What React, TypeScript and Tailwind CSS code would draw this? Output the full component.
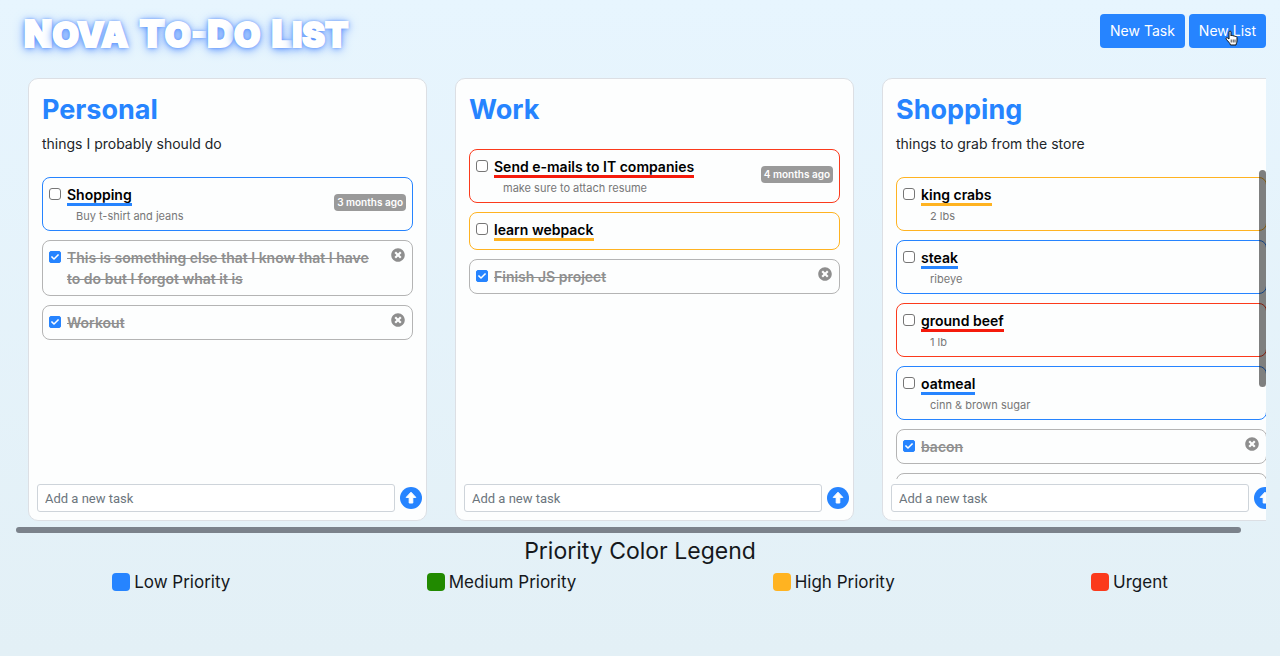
import React from "react";
import { FaCheck, FaTimesCircle } from "react-icons/fa";

type Priority = "low" | "medium" | "high" | "urgent";

interface Task {
  title: string;
  note?: string;
  priority: Priority;
  age?: string;
  done?: boolean;
}

interface TaskList {
  name: string;
  description?: string;
  tasks: Task[];
  scrollbar?: boolean;
}

const lists: TaskList[] = [
  {
    name: "Personal",
    description: "things I probably should do",
    tasks: [
      { title: "Shopping", note: "Buy t-shirt and jeans", priority: "low", age: "3 months ago" },
      { title: "This is something else that I know that I have to do but I forgot what it is", priority: "low", done: true },
      { title: "Workout", priority: "low", done: true },
    ],
  },
  {
    name: "Work",
    tasks: [
      { title: "Send e-mails to IT companies", note: "make sure to attach resume", priority: "urgent", age: "4 months ago" },
      { title: "learn webpack", priority: "high" },
      { title: "Finish JS project", priority: "low", done: true },
    ],
  },
  {
    name: "Shopping",
    description: "things to grab from the store",
    scrollbar: true,
    tasks: [
      { title: "king crabs", note: "2 lbs", priority: "high" },
      { title: "steak", note: "ribeye", priority: "low" },
      { title: "ground beef", note: "1 lb", priority: "urgent" },
      { title: "oatmeal", note: "cinn & brown sugar", priority: "low" },
      { title: "bacon", priority: "low", done: true },
      { title: "", priority: "low", done: true },
    ],
  },
];

const itemBorder: Record<Priority, string> = {
  low: "border-[#2684ff]",
  medium: "border-[#218a00]",
  high: "border-[#ffb321]",
  urgent: "border-[#fb3a1c]",
};

const titleBar: Record<Priority, string> = {
  low: "border-[#2684ff]",
  medium: "border-[#218a00]",
  high: "border-[#ffb321]",
  urgent: "border-[#f51b0c]",
};

const legend = [
  { label: "Low Priority", swatch: "bg-[#2684ff]" },
  { label: "Medium Priority", swatch: "bg-[#218a00]" },
  { label: "High Priority", swatch: "bg-[#ffb321]" },
  { label: "Urgent", swatch: "bg-[#fb3a1c]" },
];

function UpIcon() {
  return (
    <svg viewBox="0 0 22 22" className="size-[22px]" aria-hidden="true">
      <circle cx="11" cy="11" r="11" fill="#2684ff" />
      <path
        d="M11 5.200l4.800 5.200h-3v5.600h-3.600v-5.600h-3z"
        fill="#fff"
        stroke="#fff"
        strokeWidth="1"
        strokeLinejoin="round"
      />
    </svg>
  );
}

function TaskItem({ task, id }: { task: Task; id: string }) {
  const border = task.done ? "border-[#b4b4b4]" : itemBorder[task.priority];
  return (
    <li className={`flex min-h-[35px] shrink-0 items-start rounded-lg border p-1.5 ${border}`}>
      <span className="relative mt-1 flex size-3 shrink-0">
        <input
          id={id}
          type="checkbox"
          defaultChecked={task.done}
          className="peer size-3 appearance-none rounded-[3px] border border-[#767676] bg-white checked:rounded-[2px] checked:border-[#2684ff] checked:bg-[#2684ff]"
        />
        <FaCheck className="pointer-events-none absolute inset-0 m-auto hidden size-2 text-white peer-checked:block" />
      </span>
      <div className="ml-1.5 min-w-0 flex-1">
        {task.done ? (
          <label htmlFor={id} className="block text-sm leading-[21px] font-semibold text-[#8f8f8f] line-through">
            {task.title}
          </label>
        ) : (
          <label htmlFor={id} className="mb-[3px] block text-sm leading-[21px] font-semibold text-black">
            <span className={`border-b-[3px] ${titleBar[task.priority]}`}>{task.title}</span>
          </label>
        )}
        {task.note && <p className="pl-[9px] text-[11px] leading-4 text-[#777]">{task.note}</p>}
      </div>
      {task.age && (
        <span className="mt-2.5 rounded bg-[#9a9a9a] px-[3px] text-[10px] leading-[17px] font-semibold text-white">
          {task.age}
        </span>
      )}
      {task.done && (
        <button type="button" aria-label={`Remove ${task.title}`} className="mt-px mr-px ml-3 text-[#8e8e8e]">
          <FaTimesCircle className="size-[14px]" />
        </button>
      )}
    </li>
  );
}

function ListCard({ list }: { list: TaskList }) {
  const key = list.name.toLowerCase();
  return (
    <section className="mx-[14px] flex h-[443px] w-[399px] shrink-0 flex-col rounded-[10px] border border-[#dcdfe4] bg-[#fdfefe]">
      <h2 className="px-[13px] pt-3.5 text-[27px] leading-[34px] font-bold text-[#2684ff]">{list.name}</h2>
      {list.description && (
        <p className="px-[13px] pt-1.5 text-sm leading-[22px] text-[#212529]">{list.description}</p>
      )}
      <div className="relative mt-[15px] min-h-0 flex-1">
        <ul className="flex h-full flex-col gap-[9px] overflow-hidden px-[13px] pt-[7px]">
          {list.tasks.map((task, i) => (
            <TaskItem key={i} task={task} id={`${key}-${i}`} />
          ))}
        </ul>
        {list.scrollbar && <div className="absolute top-0 right-[14px] h-[217px] w-[7px] rounded-full bg-black/50" />}
      </div>
      <form className="flex items-center px-2 pt-[5px] pb-2" onSubmit={(e) => e.preventDefault()}>
        <input
          type="text"
          aria-label={`Add a new task to ${list.name}`}
          placeholder="Add a new task"
          className="h-7 min-w-0 flex-1 rounded-[3px] border border-[#ced4da] bg-white px-[7px] font-['Roboto',sans-serif] text-[13px] text-[#495057] placeholder:text-[#6c757d]"
        />
        <button type="submit" aria-label="Add task" className="mr-[-4px] ml-[5px]">
          <UpIcon />
        </button>
      </form>
    </section>
  );
}

function Cursor() {
  return (
    <svg viewBox="0 0 14 16" className="pointer-events-none absolute top-4 left-9 h-4 w-[14px]" aria-hidden="true">
      <path
        d="M4 9V2.2C4 .6 6 .6 6 2.2V6c.3-1 2-.9 2 .2.4-.8 2-.6 2 .5.6-.7 2-.3 2 .8V11c0 2-1 2.5-1 4H5.500C5 13 3 11.500 1.300 9.300.400 8 2 7.200 3 8.200z"
        fill="#fff"
        stroke="#111"
      />
      <path d="M6.200 9.500v3M8.200 9.500v3M10 9.500v3" stroke="#111" strokeWidth=".8" />
    </svg>
  );
}

const brandWords = ["Nova", "To-Do", "List"];

function Brand() {
  return (
    <h1 className="flex gap-[11px] text-[34px] leading-[40px] font-black whitespace-nowrap text-white uppercase [-webkit-text-stroke:2px_white] [text-shadow:0_0_3px_#3b78f0,0_1px_6px_#5b93ff,0_2px_12px_#6ea0ff]">
      {brandWords.map((word) => (
        <span key={word}>
          {word.split("-").map((part, j) => (
            <React.Fragment key={part}>
              {j > 0 && "-"}
              <span className="text-[37px]">{part[0]}</span>
              {part.slice(1)}
            </React.Fragment>
          ))}
        </span>
      ))}
    </h1>
  );
}

export default function App() {
  return (
    <div className="flex min-h-screen flex-col bg-linear-to-b from-[#e7f5fe] to-[#e3f0f6] px-3.5 font-['Inter',sans-serif]">
      <header className="flex h-[60px] items-start justify-between pt-3.5">
        <div className="pl-2.5">
          <Brand />
        </div>
        <div className="flex gap-1 text-sm text-white">
          <button type="button" className="h-[34px] rounded bg-[#2684ff] px-2.5">
            New Task
          </button>
          <button type="button" className="relative h-[34px] rounded bg-[#2684ff] px-2.5">
            New List
            <Cursor />
          </button>
        </div>
      </header>
      <main className="mt-[18px]">
        <div className="flex overflow-hidden">
          {lists.map((list) => (
            <ListCard key={list.name} list={list} />
          ))}
        </div>
        <div className="mt-1.5 mr-[25px] ml-0.5 h-1.5 rounded-full bg-[#7b828b]" />
      </main>
      <footer className="mt-1 text-[#15181c]">
        <h2 className="text-center text-[23px] leading-[28px]">Priority Color Legend</h2>
        <ul className="mt-[5px] flex justify-around text-[17px] leading-6">
          {legend.map((entry) => (
            <li key={entry.label} className="flex items-center gap-1">
              <span className={`size-[18px] rounded ${entry.swatch}`} />
              {entry.label}
            </li>
          ))}
        </ul>
      </footer>
    </div>
  );
}
